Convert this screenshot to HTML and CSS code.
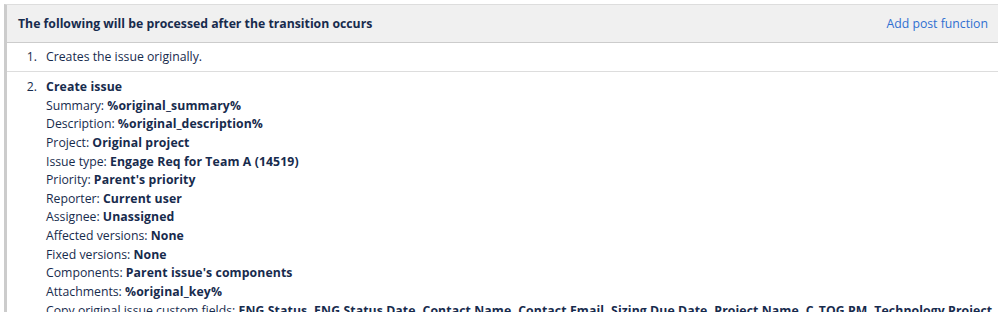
FILE: index.html
```html
<!DOCTYPE html>
<html>
<head>
<meta charset="utf-8">
<link rel="stylesheet" href="styles.css">
</head>
<body>
<div class="panel">
  <div class="panel-header">
    <h3 class="panel-title">The following will be processed after the transition occurs</h3>
    <a class="add-link" href="#">Add post function</a>
  </div>
  <div class="row row-first">
    <span class="num">1.</span>
    <div class="content">Creates the issue originally.</div>
  </div>
  <div class="row row-second">
    <span class="num">2.</span>
    <div class="content">
      <div class="line"><b>Create issue</b></div>
      <div class="line">Summary: <b>%original_summary%</b></div>
      <div class="line">Description: <b>%original_description%</b></div>
      <div class="line">Project: <b>Original project</b></div>
      <div class="line">Issue type: <b>Engage Req for Team A (14519)</b></div>
      <div class="line">Priority: <b>Parent's priority</b></div>
      <div class="line">Reporter: <b>Current user</b></div>
      <div class="line">Assignee: <b>Unassigned</b></div>
      <div class="line">Affected versions: <b>None</b></div>
      <div class="line">Fixed versions: <b>None</b></div>
      <div class="line">Components: <b>Parent issue's components</b></div>
      <div class="line">Attachments: <b>%original_key%</b></div>
      <div class="line nowrap">Copy original issue custom fields: <b>ENG Status, ENG Status Date, Contact Name, Contact Email, Sizing Due Date, Project Name, C_TOG PM, Technology Project</b></div>
    </div>
  </div>
</div>
</body>
</html>
```
FILE: styles.css
```css
html, body {
  margin: 0;
  padding: 0;
  background: #ffffff;
  overflow: hidden;
}
body {
  font-family: "Open Sans", "Noto Sans", sans-serif;
  font-size: 12.25px;
  color: #172b4d;
  padding-top: 4px;
  padding-left: 4px;
}
.panel {
  border-left: 3px solid #cccccc;
  border-top: 1px solid #dddddd;
}
.panel-header {
  display: flex;
  align-items: center;
  justify-content: space-between;
  height: 37px;
  padding: 0 10px 0 11px;
  background: #f0f0f0;
  border-bottom: 1px solid #cccccc;
}
.panel-title {
  margin: 0;
  font-size: 12.25px;
  font-weight: 700;
  color: #172b4d;
}
.add-link {
  color: #2f6fd1;
  text-decoration: none;
}
.row {
  display: flex;
  border-bottom: 1px solid #dddddd;
}
.row-first {
  height: 28px;
  align-items: center;
}
.row-second {
  padding-top: 6px;
  align-items: flex-start;
}
.num {
  width: 30px;
  text-align: right;
  flex: none;
  line-height: 18.64px;
}
.content {
  margin-left: 9px;
  line-height: 18.64px;
}
.content b {
  font-weight: 700;
  letter-spacing: 0.1px;
}
.nowrap {
  white-space: nowrap;
}
```
